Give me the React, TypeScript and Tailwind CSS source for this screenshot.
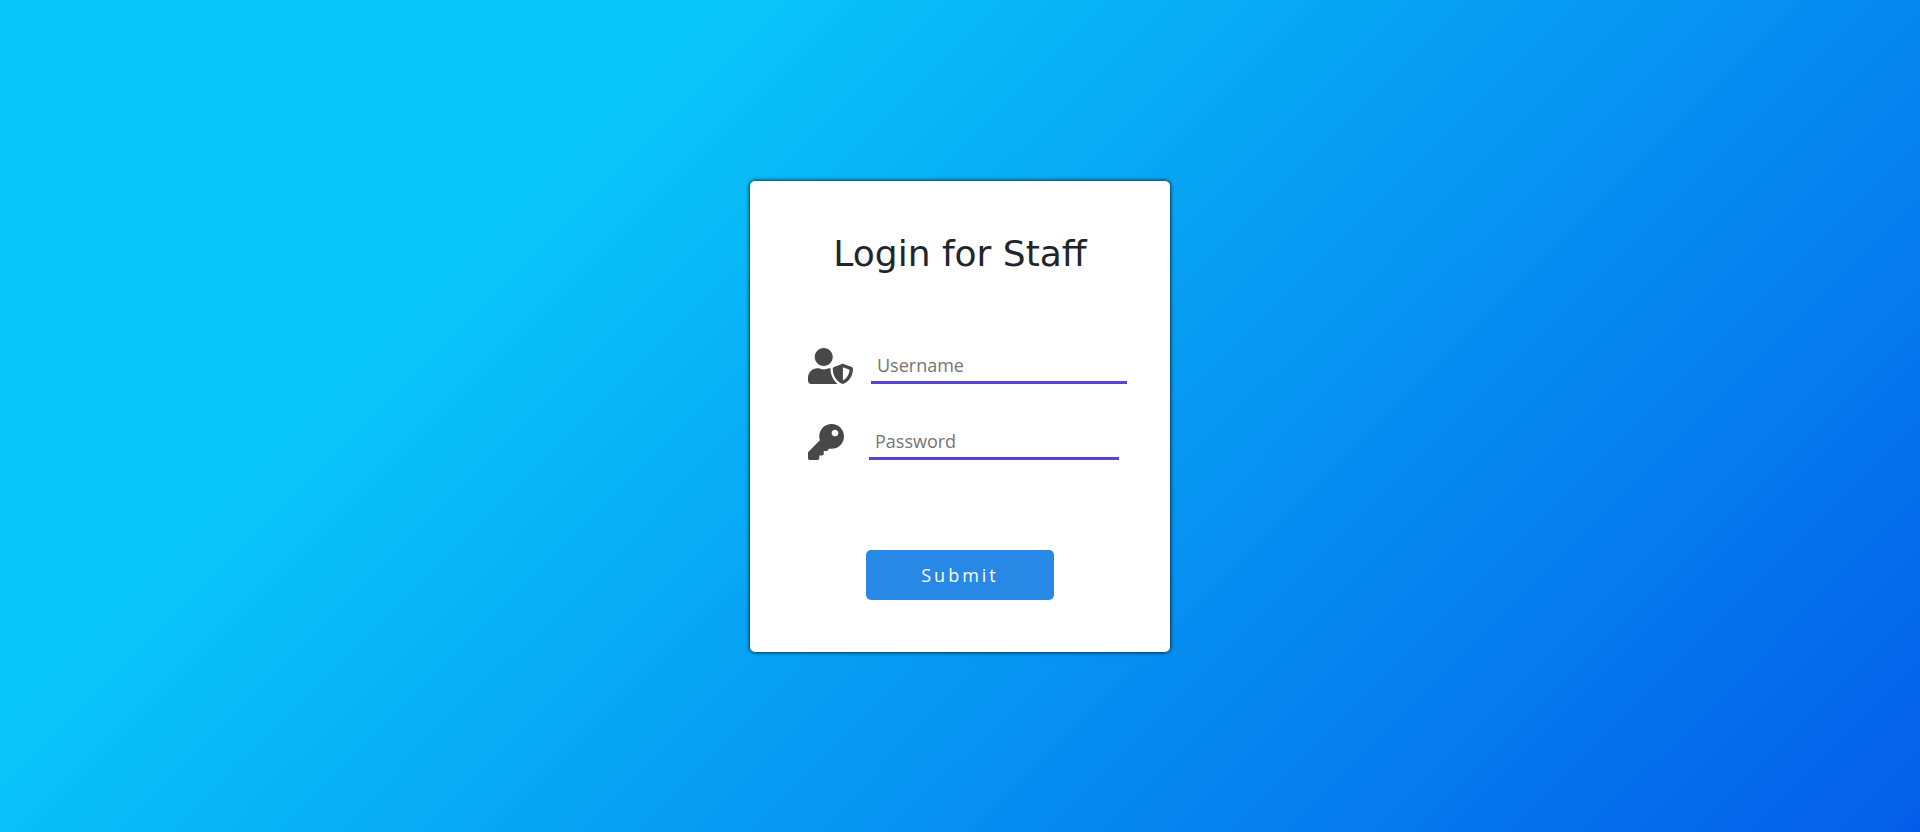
import { FaKey, FaUserShield } from "react-icons/fa";

const fieldClass =
  "h-9 min-w-0 border-b-[3px] border-[#5746cd] bg-transparent px-1.5 pt-0.5 text-lg text-[#212529] outline-none placeholder:text-[#757575]";

export default function App() {
  return (
    <main className="flex min-h-screen items-center justify-center bg-[linear-gradient(315deg,#045de9_0%,#09c6f9_74%)] font-['Open_Sans',sans-serif]">
      <form
        className="flex w-full max-w-[420px] flex-col rounded-[5px] bg-white pt-12 pb-[52px] shadow-[0_0_4px_#000]"
        onSubmit={(event) => event.preventDefault()}
      >
        <h1 className="text-center font-['DejaVu_Sans',sans-serif] text-4xl leading-[50px] text-[#212529]">
          Login for Staff
        </h1>
        <div className="mt-[69px] flex h-9 items-center gap-[18px] px-10 pl-[58px]">
          <label htmlFor="username" aria-label="Username">
            <FaUserShield className="h-9 w-[45px] text-[#484848]" />
          </label>
          <input id="username" type="text" placeholder="Username" className={`${fieldClass} w-64`} />
        </div>
        <div className="mt-10 flex h-9 items-center gap-[25px] px-10 pl-[58px]">
          <label htmlFor="password" aria-label="Password">
            <FaKey className="size-9 text-[#484848]" />
          </label>
          <input id="password" type="password" placeholder="Password" className={`${fieldClass} w-[250px]`} />
        </div>
        <button
          type="submit"
          className="mt-[90px] h-[50px] w-[188px] self-center rounded-[5px] bg-[#2888e6] text-lg tracking-[3px] text-white"
        >
          Submit
        </button>
      </form>
    </main>
  );
}
